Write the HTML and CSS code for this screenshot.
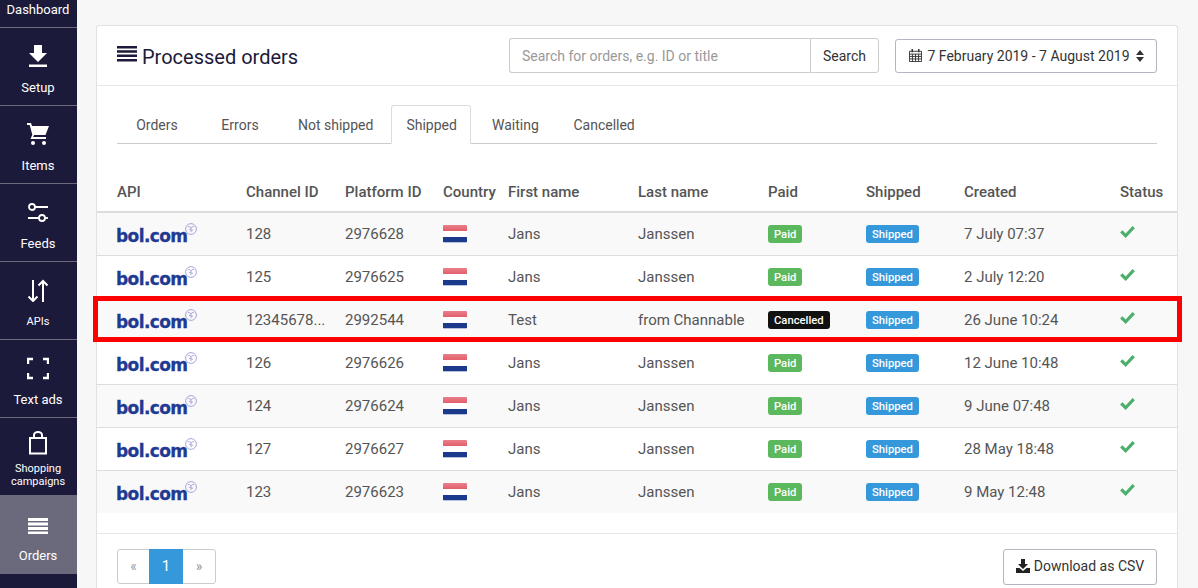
FILE: index.html
```html
<!DOCTYPE html>
<html lang="en">

<head>
    <meta charset="UTF-8">
    <title>Processed orders</title>
    <link rel="stylesheet" href="styles.css">
</head>

<body>
    <!-- icons used in every row -->
    <svg class="defs">
        <symbol id="mark" viewBox="0 0 12 12">
            <g fill="none" stroke="#9f9dd6" stroke-width=".9">
                <circle cx="6" cy="6" r="5.400"/>
                <path d="M2.800 3.800c1.600-.6 2.600 0 3.200 1.200.6-1.200 1.600-1.800 3.200-1.200M6 5v4.200M4 6.400h1.800M6.200 7.200h1.800"/>
            </g>
        </symbol>
        <symbol id="check" viewBox="0 0 16 13">
            <path d="M0 7l2.500-2.500L6 8l7.500-8L16 2.500 6 13z" fill="#4cae6b"/>
        </symbol>
    </svg>

    <div class="page">
        <!-- sidebar -->
        <nav class="sidebar">
            <a class="nav-item nav-first"><span>Dashboard</span></a>
            <a class="nav-item">
                <svg class="nav-icon" viewBox="0 0 20 24"><path d="M6 1h8v8h5l-9 9-9-9h5zM1 20.500h18V23H1z" fill="#fff"/></svg>
                <span>Setup</span>
            </a>
            <a class="nav-item">
                <svg class="nav-icon" viewBox="0 0 22 24"><path d="M0 1h4l1 3h17l-3.500 9H7l-.8 2H19v2H3.500l1.800-4.200L2.700 3H0z" fill="#fff"/><circle cx="6" cy="21" r="2" fill="#fff"/><circle cx="17" cy="21" r="2" fill="#fff"/></svg>
                <span>Items</span>
            </a>
            <a class="nav-item">
                <svg class="nav-icon" viewBox="0 0 22 24" fill="none" stroke="#fff" stroke-width="1.800"><circle cx="5" cy="7" r="3"/><path d="M8 7h13M1 18h11"/><circle cx="15" cy="18" r="3"/><path d="M18 18h3"/></svg>
                <span>Feeds</span>
            </a>
            <a class="nav-item">
                <svg class="nav-icon" viewBox="0 0 22 24" fill="none" stroke="#fff" stroke-width="2"><path d="M6 2v21M1.500 18.500 6 23l4.500-4.500M16 24V3M11.500 7.500 16 3l4.500 4.500"/></svg>
                <span class="nav-small">APIs</span>
            </a>
            <a class="nav-item">
                <svg class="nav-icon" viewBox="0 0 22 24" fill="none" stroke="#fff" stroke-width="2.400"><path d="M1 8V3h5M16 3h5v5M21 17v5h-5M6 22H1v-5"/></svg>
                <span>Text ads</span>
            </a>
            <a class="nav-item nav-two">
                <svg class="nav-icon" viewBox="0 0 20 24" fill="none" stroke="#fff" stroke-width="2"><path d="M2 7h16v15.500H2zM6 7V4a4 3 0 0 1 8 0v3"/></svg>
                <span class="nav-small">Shopping<br>campaigns</span>
            </a>
            <a class="nav-item nav-active">
                <svg class="nav-icon" viewBox="0 0 22 24"><path d="M1 6h20v3H1zM1 10.500h20v3H1zM1 15h20v3H1zM1 19.500h20V22H1z" fill="#fff"/></svg>
                <span>Orders</span>
            </a>
        </nav>

        <main class="main">
            <div class="card">
                <div class="card-head">
                    <h1 class="title">
                        <svg class="title-icon" viewBox="0 0 20 16"><path d="M0 0h20v2.500H0zM0 4.300h20v2.500H0zM0 8.600h20v2.500H0zM0 12.900h20v2.500H0z" fill="#1c1a3a"/></svg>
                        Processed orders
                    </h1>
                    <div class="search">
                        <input class="search-input" type="text" placeholder="Search for orders, e.g. ID or title">
                        <button class="btn search-btn">Search</button>
                    </div>
                    <button class="btn date-btn">
                        <svg class="cal" viewBox="0 0 14 14" fill="none" stroke="#333" stroke-width="1"><path d="M.5 2.500h13v11H.5zM.5 5.500h13M.5 8h13M.5 10.700h13M3.700 5.500v8M7 5.500v8M10.300 5.500v8"/><path d="M3.500 0v3.500M10.500 0v3.500" stroke-width="1.600"/></svg>
                        7 February 2019 - 7 August 2019
                        <svg class="sort" viewBox="0 0 8 12"><path d="M4 0l4 5H0zM4 12L0 7h8z" fill="#333"/></svg>
                    </button>
                </div>

                <div class="tabs">
                    <a class="tab">Orders</a>
                    <a class="tab">Errors</a>
                    <a class="tab">Not shipped</a>
                    <a class="tab tab-active">Shipped</a>
                    <a class="tab">Waiting</a>
                    <a class="tab">Cancelled</a>
                </div>

                <table class="orders">
                    <colgroup>
                        <col class="c-api"><col class="c-chan"><col class="c-plat"><col class="c-country"><col class="c-first">
                        <col class="c-last"><col class="c-paid"><col class="c-ship"><col class="c-created"><col class="c-status">
                    </colgroup>
                    <thead>
                        <tr><th>API</th><th>Channel ID</th><th>Platform ID</th><th>Country</th><th>First name</th><th>Last name</th><th>Paid</th><th>Shipped</th><th>Created</th><th>Status</th></tr>
                    </thead>
                    <tbody>
                        <tr>
                            <td><span class="logo">bol.com<svg class="logo-mark"><use href="#mark"/></svg></span></td>
                            <td>128</td><td>2976628</td>
                            <td><span class="flag"></span></td>
                            <td>Jans</td><td>Janssen</td>
                            <td><span class="label label-green">Paid</span></td>
                            <td><span class="label label-blue">Shipped</span></td>
                            <td>7 July 07:37</td>
                            <td><svg class="check"><use href="#check"/></svg></td>
                        </tr>
                        <tr>
                            <td><span class="logo">bol.com<svg class="logo-mark"><use href="#mark"/></svg></span></td>
                            <td>125</td><td>2976625</td>
                            <td><span class="flag"></span></td>
                            <td>Jans</td><td>Janssen</td>
                            <td><span class="label label-green">Paid</span></td>
                            <td><span class="label label-blue">Shipped</span></td>
                            <td>2 July 12:20</td>
                            <td><svg class="check"><use href="#check"/></svg></td>
                        </tr>
                        <tr>
                            <td><span class="logo">bol.com<svg class="logo-mark"><use href="#mark"/></svg></span></td>
                            <td>12345678...</td><td>2992544</td>
                            <td><span class="flag"></span></td>
                            <td>Test</td><td>from Channable</td>
                            <td><span class="label label-black">Cancelled</span></td>
                            <td><span class="label label-blue">Shipped</span></td>
                            <td>26 June 10:24</td>
                            <td><svg class="check"><use href="#check"/></svg></td>
                        </tr>
                        <tr>
                            <td><span class="logo">bol.com<svg class="logo-mark"><use href="#mark"/></svg></span></td>
                            <td>126</td><td>2976626</td>
                            <td><span class="flag"></span></td>
                            <td>Jans</td><td>Janssen</td>
                            <td><span class="label label-green">Paid</span></td>
                            <td><span class="label label-blue">Shipped</span></td>
                            <td>12 June 10:48</td>
                            <td><svg class="check"><use href="#check"/></svg></td>
                        </tr>
                        <tr>
                            <td><span class="logo">bol.com<svg class="logo-mark"><use href="#mark"/></svg></span></td>
                            <td>124</td><td>2976624</td>
                            <td><span class="flag"></span></td>
                            <td>Jans</td><td>Janssen</td>
                            <td><span class="label label-green">Paid</span></td>
                            <td><span class="label label-blue">Shipped</span></td>
                            <td>9 June 07:48</td>
                            <td><svg class="check"><use href="#check"/></svg></td>
                        </tr>
                        <tr>
                            <td><span class="logo">bol.com<svg class="logo-mark"><use href="#mark"/></svg></span></td>
                            <td>127</td><td>2976627</td>
                            <td><span class="flag"></span></td>
                            <td>Jans</td><td>Janssen</td>
                            <td><span class="label label-green">Paid</span></td>
                            <td><span class="label label-blue">Shipped</span></td>
                            <td>28 May 18:48</td>
                            <td><svg class="check"><use href="#check"/></svg></td>
                        </tr>
                        <tr>
                            <td><span class="logo">bol.com<svg class="logo-mark"><use href="#mark"/></svg></span></td>
                            <td>123</td><td>2976623</td>
                            <td><span class="flag"></span></td>
                            <td>Jans</td><td>Janssen</td>
                            <td><span class="label label-green">Paid</span></td>
                            <td><span class="label label-blue">Shipped</span></td>
                            <td>9 May 12:48</td>
                            <td><svg class="check"><use href="#check"/></svg></td>
                        </tr>
                    </tbody>
                </table>

                <div class="card-foot">
                    <div class="pager">
                        <a class="page-link">«</a>
                        <a class="page-link page-on">1</a>
                        <a class="page-link page-next">»</a>
                    </div>
                    <button class="btn csv-btn">
                        <svg class="csv-icon" viewBox="0 0 14 14"><path d="M5 0h4v5h3L7 10 2 5h3z" fill="#222"/><path d="M0 9h3.500L7 12l3.500-3H14v5H0z" fill="#222"/></svg>
                        Download as CSV
                    </button>
                </div>
            </div>
        </main>

        <!-- red annotation round the third row -->
        <div class="highlight"></div>
    </div>
</body>

</html>
```

FILE: styles.css
```css
* {
    margin: 0;
    padding: 0;
    box-sizing: border-box;
}

html,
body {
    height: 588px;
    overflow: hidden;
}

body {
    font-family: Roboto, "Liberation Sans", sans-serif;
    font-size: 15px;
    color: #555;
    background-color: #f7f7f7;
}

.defs {
    display: none;
}

.page {
    display: flex;
    position: relative;
    height: 588px;
}

/* sidebar */
.sidebar {
    width: 77px;
    flex: none;
    background-color: #1c1a3a;
    color: #fff;
    text-align: center;
}

.nav-item {
    display: flex;
    flex-direction: column;
    align-items: center;
    height: 78px;
    padding: 16px 1px 0 0;
    border-bottom: 1px solid #6b6a7c;
    font-size: 13px;
    line-height: 16px;
}

.nav-first {
    height: 28px;
    padding-top: 2px;
}

.nav-icon {
    width: 22px;
    height: 24px;
    margin-bottom: 12px;
    flex: none;
}

.nav-small {
    font-size: 11px;
    line-height: 13px;
    padding-top: 1px;
}

.nav-two {
    padding-top: 13px;
}

.nav-two .nav-icon {
    margin-bottom: 6px;
}

.nav-active {
    background-color: #6b6a7c;
    border-bottom: 0;
}

/* card */
.main {
    flex: 1;
    padding: 25px 20px 0 19px;
    min-width: 0;
}

.card {
    background-color: #fff;
    border: 1px solid #e2e2e2;
    border-bottom: 0;
    border-radius: 3px 3px 0 0;
    height: 563px;
}

.card-head {
    display: flex;
    align-items: center;
    height: 60px;
    padding: 0 20px;
    border-bottom: 1px solid #e7e7e7;
}

.title {
    flex: 1;
    font-size: 20px;
    font-weight: 400;
    color: #1c1a3a;
    display: flex;
    align-items: center;
    gap: 5px;
    padding-top: 2px;
}

.title-icon {
    width: 20px;
    height: 16px;
    margin-top: -5px;
}

.btn {
    font-family: inherit;
    font-size: 14px;
    color: #333;
    background-color: #fff;
    border: 1px solid #b5b4bf;
    border-radius: 3px;
}

.search {
    display: flex;
    height: 35px;
    width: 370px;
    margin-right: 16px;
}

.search-input {
    flex: 1;
    min-width: 0;
    font-family: inherit;
    font-size: 14px;
    padding: 0 12px;
    border: 1px solid #ccc;
    border-right: 0;
    border-radius: 3px 0 0 3px;
    outline: none;
}

.search-input::placeholder {
    color: #999;
}

.search-btn {
    width: 69px;
    border-color: #ccc;
    border-radius: 0 3px 3px 0;
}

.date-btn {
    display: flex;
    align-items: center;
    justify-content: center;
    gap: 6px;
    width: 262px;
    height: 34px;
}

.cal {
    width: 13px;
    height: 13px;
}

.sort {
    width: 8px;
    height: 12px;
}

/* tabs */
.tabs {
    display: flex;
    margin: 19px 20px 0;
    height: 39px;
    border-bottom: 1px solid #ccc;
    font-size: 14px;
}

.tab {
    min-width: 80px;
    height: 39px;
    padding: 0 15px;
    text-align: center;
    line-height: 41px;
    color: #555;
    margin-right: 3px;
}

.tab-active {
    background-color: #fff;
    border: 1px solid #ddd;
    border-bottom: 1px solid #fff;
    border-radius: 3px 3px 0 0;
    width: 80px;
    padding: 0 14px;
    line-height: 39px;
    margin: 0 4px 0 0;
}

/* table */
.orders {
    table-layout: fixed;
    width: 1080px;
    margin-top: 26px;
    border-collapse: collapse;
}

.c-api { width: 149px; }
.c-chan { width: 99px; }
.c-plat { width: 98px; }
.c-country { width: 65px; }
.c-first { width: 130px; }
.c-last { width: 130px; }
.c-paid { width: 98px; }
.c-ship { width: 98px; }
.c-created { width: 156px; }
.c-status { width: 57px; }

.orders th {
    height: 42px;
    padding-top: 2px;
    text-align: left;
    font-weight: 500;
    color: #555;
    border-bottom: 2px solid #ddd;
    white-space: nowrap;
}

.orders td {
    height: 43px;
    border-bottom: 1px solid #ddd;
    white-space: nowrap;
    color: #555;
}

.orders tbody tr:nth-child(odd) {
    background-color: #f9f9f9;
}

.orders tbody tr:last-child td {
    border-bottom: 0;
}

.orders th:first-child,
.orders td:first-child {
    padding-left: 20px;
}

.logo {
    display: inline-block;
    position: relative;
    top: 2px;
    margin-left: -1px;
    font-family: "DejaVu Sans", sans-serif;
    font-size: 17px;
    font-weight: 700;
    letter-spacing: -.6px;
    line-height: 20px;
    color: #1f3a93;
    -webkit-text-stroke: .3px #1f3a93;
}

.logo-mark {
    position: absolute;
    left: 69px;
    top: -3px;
    width: 12px;
    height: 12px;
}

.flag {
    display: block;
    width: 24px;
    height: 18px;
    border-radius: 1px;
    /* three stripes with the sprite's soft shine */
    background: linear-gradient(#e8808a 0, #e25f6b 6px, #fff 6px, #fff 12px, #1c3a8c 12px, #1c3a8c 17px, #b9c2dc 17px);
}

.label {
    display: block;
    width: fit-content;
    padding: 0 6px;
    height: 18px;
    line-height: 19px;
    font-size: 11.25px;
    font-weight: 500;
    color: #fff;
    border-radius: 3px;
}

.label-green { background-color: #5cb85c; }
.label-black { background-color: #111; }
.label-blue { background-color: #3498db; }

.check {
    display: block;
    width: 15px;
    height: 12px;
    margin-top: -4px;
}

/* footer */
.card-foot {
    display: flex;
    justify-content: space-between;
    align-items: flex-start;
    margin-top: 20px;
    padding: 15px 20px 0;
    border-top: 1px solid #e7e7e7;
}

.pager {
    display: flex;
    height: 35px;
    border: 1px solid #ccc;
    border-radius: 3px;
    font-size: 14px;
}

.page-link {
    width: 31px;
    text-align: center;
    line-height: 33px;
    color: #999;
}

.page-next {
    width: 32px;
}

.page-on {
    width: 34px;
    height: 35px;
    margin-top: -1px;
    line-height: 35px;
    font-size: 15px;
    background-color: #3498db;
    color: #fff;
}

.csv-btn {
    display: flex;
    align-items: center;
    justify-content: center;
    gap: 4px;
    width: 154px;
    height: 36px;
    padding-bottom: 2px;
}

.csv-icon {
    width: 14px;
    height: 14px;
}

/* annotation */
.highlight {
    position: absolute;
    left: 93px;
    top: 296px;
    width: 1089px;
    height: 46px;
    border: 5px solid #f00;
}
```
